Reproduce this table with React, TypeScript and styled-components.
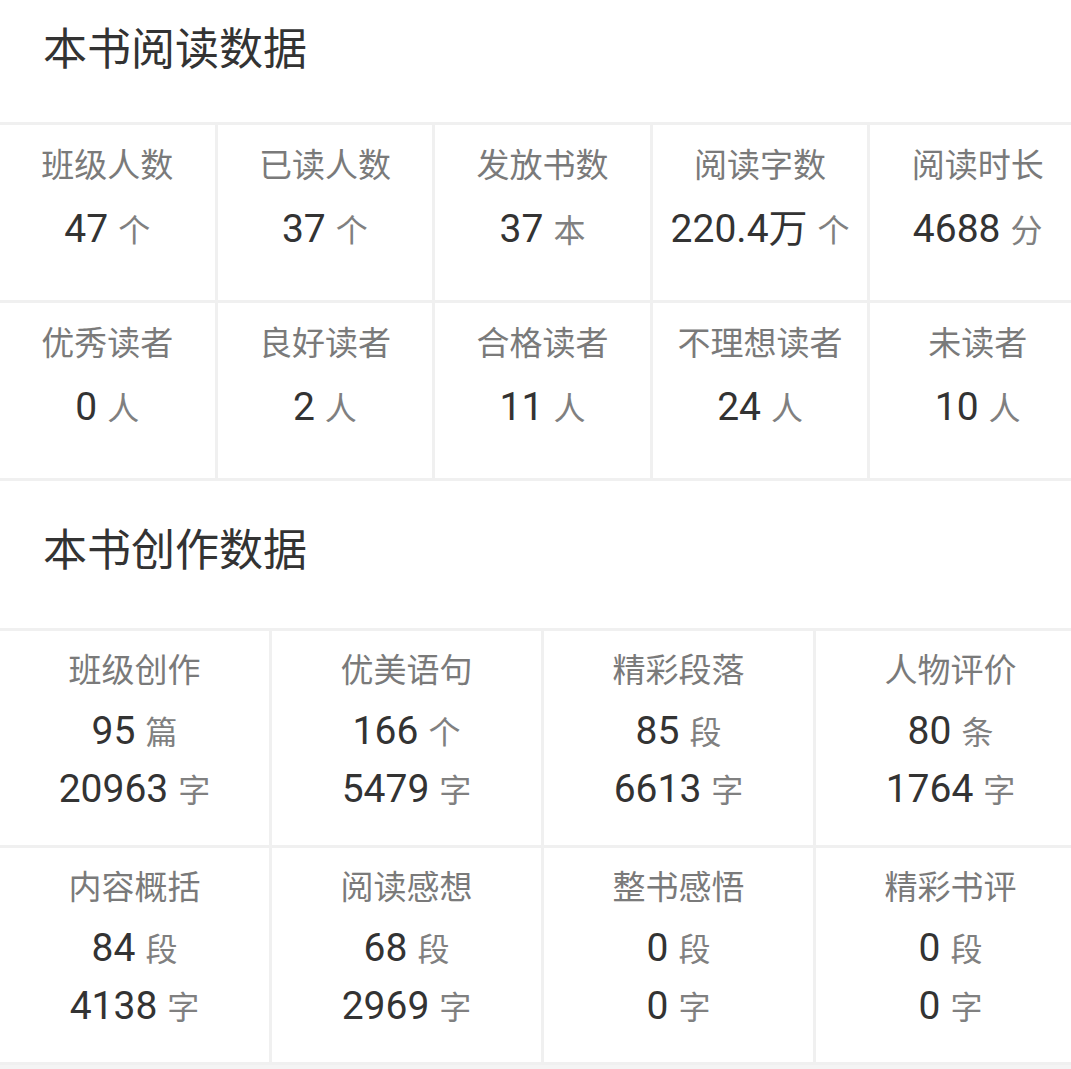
import React from "react";
import styled, { createGlobalStyle } from "styled-components";

const Global = createGlobalStyle`
  html, body {
    margin: 0;
    padding: 0;
    background: #ffffff;
    overflow: hidden;
  }
  body {
    font-family: "Noto Sans CJK SC", "Noto Sans", sans-serif;
  }
`;

const Page = styled.div`
  width: 1071px;
  height: 1069px;
  overflow: hidden;
  background: #f4f4f4;
`;

const Section = styled.section`
  background: #ffffff;
`;

const Title = styled.h2<{ $top: number; $bottom: number }>`
  margin: 0;
  padding: ${(p) => p.$top}px 0 ${(p) => p.$bottom}px 43px;
  font-size: 44px;
  line-height: 56px;
  font-weight: 400;
  color: #333333;
  letter-spacing: 0;
`;

const Grid = styled.div<{ $cols: number }>`
  width: 1085px;
  display: grid;
  grid-template-columns: repeat(${(p) => p.$cols}, 1fr);
  gap: 3px;
  background: #f0f0f0;
  border-top: 3px solid #f0f0f0;
  border-bottom: 3px solid #f0f0f0;
`;

const Cell = styled.div<{ $h: number; $pad: number }>`
  height: ${(p) => p.$h}px;
  background: #ffffff;
  display: flex;
  flex-direction: column;
  align-items: center;
  padding-top: ${(p) => p.$pad}px;
  box-sizing: border-box;
`;

const Label = styled.div`
  font-size: 33px;
  line-height: 40px;
  color: #7a7a7a;
  white-space: nowrap;
`;

const Value = styled.div<{ $mt: number }>`
  margin-top: ${(p) => p.$mt}px;
  display: flex;
  align-items: baseline;
  gap: 10px;
  line-height: 44px;
  white-space: nowrap;
`;

const Num = styled.span`
  font-family: "Roboto", "Noto Sans CJK SC", sans-serif;
  font-size: 39px;
  color: #333333;
`;

const Unit = styled.span`
  font-size: 32px;
  color: #808080;
`;

type Item = { label: string; values: [string, string][] };

const reading: Item[] = [
  { label: "班级人数", values: [["47", "个"]] },
  { label: "已读人数", values: [["37", "个"]] },
  { label: "发放书数", values: [["37", "本"]] },
  { label: "阅读字数", values: [["220.4万", "个"]] },
  { label: "阅读时长", values: [["4688", "分"]] },
  { label: "优秀读者", values: [["0", "人"]] },
  { label: "良好读者", values: [["2", "人"]] },
  { label: "合格读者", values: [["11", "人"]] },
  { label: "不理想读者", values: [["24", "人"]] },
  { label: "未读者", values: [["10", "人"]] },
];

const writing: Item[] = [
  { label: "班级创作", values: [["95", "篇"], ["20963", "字"]] },
  { label: "优美语句", values: [["166", "个"], ["5479", "字"]] },
  { label: "精彩段落", values: [["85", "段"], ["6613", "字"]] },
  { label: "人物评价", values: [["80", "条"], ["1764", "字"]] },
  { label: "内容概括", values: [["84", "段"], ["4138", "字"]] },
  { label: "阅读感想", values: [["68", "段"], ["2969", "字"]] },
  { label: "整书感悟", values: [["0", "段"], ["0", "字"]] },
  { label: "精彩书评", values: [["0", "段"], ["0", "字"]] },
];

function Stat({ item, h, pad, gaps }: { item: Item; h: number; pad: number; gaps: number[] }) {
  return (
    <Cell $h={h} $pad={pad}>
      <Label>{item.label}</Label>
      {item.values.map(([n, u], i) => (
        <Value key={i} $mt={gaps[i]}>
          <Num>{n}</Num>
          <Unit>{u}</Unit>
        </Value>
      ))}
    </Cell>
  );
}

export default function App() {
  return (
    <Page>
      <Global />
      <Section>
        <Title $top={18} $bottom={48}>本书阅读数据</Title>
        <Grid $cols={5}>
          {reading.map((it) => (
            <Stat key={it.label} item={it} h={175} pad={18} gaps={[23]} />
          ))}
        </Grid>
        <Title $top={38} $bottom={53}>本书创作数据</Title>
        <Grid $cols={4}>
          {writing.map((it) => (
            <Stat key={it.label} item={it} h={214} pad={17} gaps={[20, 13]} />
          ))}
        </Grid>
      </Section>
    </Page>
  );
}
